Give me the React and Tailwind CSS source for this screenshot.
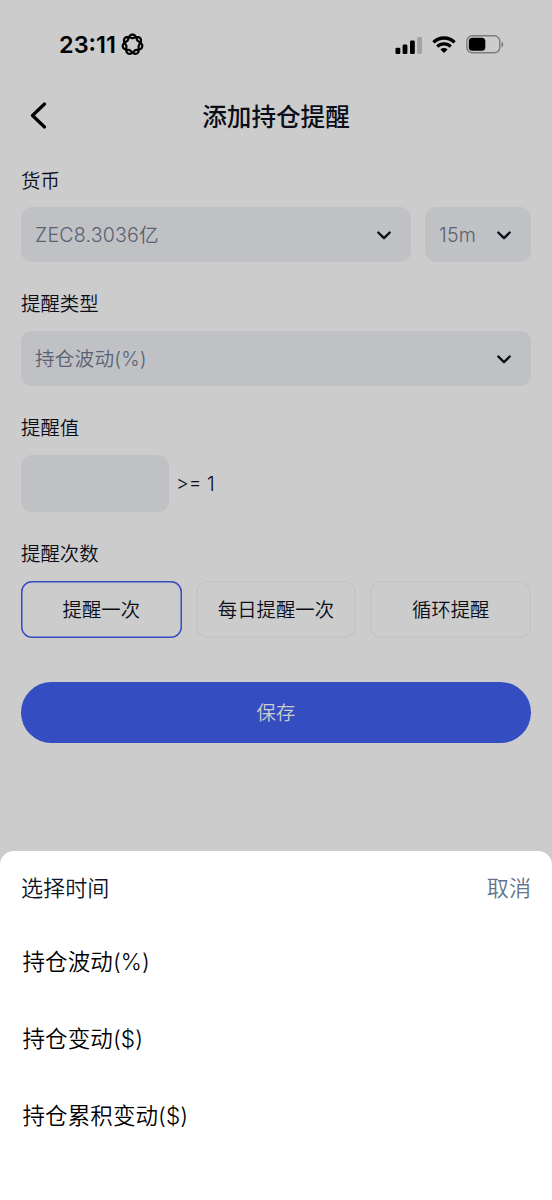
import React, { useState } from 'react';

const frequencies = ['提醒一次', '每日提醒一次', '循环提醒'];
const options = ['持仓波动(%)', '持仓变动($)', '持仓累积变动($)'];

// Seven-lobed woven ring, two turns around the centre
const rosette = Array.from({ length: 169 }, (_, i) => {
    const t = (i / 168) * Math.PI * 4;
    const r = 7.8 + 1.75 * Math.cos(3.5 * t);
    return `${(11 + r * Math.sin(t)).toFixed(2)},${(11 - r * Math.cos(t)).toFixed(2)}`;
}).join(' ');

const Chevron = () => (
    <svg width="14" height="9" viewBox="0 0 14 9" fill="none" stroke="#0b0e18" strokeWidth="2.4" strokeLinecap="round" strokeLinejoin="round">
        <path d="M1.3 1.5 7 7.1l5.7-5.6" />
    </svg>
);

const StatusBar = () => (
    <div className="flex h-[90px] items-center justify-between pl-[59px] pr-12 text-black">
        <div className="flex items-center gap-[5px]">
            <span className="font-['Inter'] text-[23.5px] leading-7 font-semibold">23:11</span>
            <svg className="mb-px" width="23" height="23" viewBox="0 0 22 22" fill="none" stroke="currentColor" strokeWidth="2.1" strokeLinejoin="round">
                <polygon points={rosette} />
            </svg>
        </div>
        <div className="flex items-center">
            <svg width="27" height="17" viewBox="0 0 27 17" fill="currentColor">
                <rect x="0.5" y="10.8" width="4.8" height="6.2" rx="1.3" />
                <rect x="7.6" y="7.6" width="4.8" height="9.4" rx="1.3" />
                <rect x="15" y="3.6" width="4.8" height="13.4" rx="1.3" />
                <rect x="22.2" y="0" width="4.8" height="17" rx="1.3" fill="#a3a3a3" />
            </svg>
            <svg className="mb-px ml-2.5" width="24" height="17" viewBox="0 0 24 17" fill="none" stroke="currentColor" strokeWidth="3.3">
                <path d="M1.4 6.4a15 15 0 0 1 21.2 0" />
                <path d="M5.3 10.6a9.5 9.5 0 0 1 13.4 0" />
                <path d="M12 17 8.4 13.6a5.1 5.1 0 0 1 7.2 0z" fill="currentColor" stroke="none" />
            </svg>
            <svg className="mb-px ml-2.5" width="38" height="19" viewBox="0 0 38 19">
                <rect x="0.8" y="0.8" width="33" height="17" rx="5.5" fill="none" stroke="#7c7c7c" strokeWidth="1.4" />
                <rect x="2.8" y="2.8" width="16.5" height="13" rx="3.6" fill="#000" />
                <path d="M35.5 6.5c2.4 1 2.4 5 0 6z" fill="#7c7c7c" />
            </svg>
        </div>
    </div>
);

const Select = ({ value, className }) => (
    <button className={`flex h-[55px] items-center justify-between rounded-[11px] bg-[#c0c1c5] px-3.5 text-[19.6px] tracking-[0.2px] text-[#596171] ${className}`}>
        <span className="pt-[3px]">{value}</span>
        <span className="mr-1.5 pt-px"><Chevron /></span>
    </button>
);

const Label = ({ children }) => (
    <div className="h-7 pt-px text-[19.4px] leading-7 text-[#0b0e18]">{children}</div>
);

const App = () => {
    const [active, setActive] = useState(0);

    return (
        <div className="flex h-[1200px] w-[552px] flex-col overflow-hidden bg-[#cccccc] font-['Inter','Noto_Sans_CJK_SC',sans-serif] font-[350]">
            <div className="h-[851px]">
                <StatusBar />

                {/* Title bar */}
                <header className="grid h-[52px] grid-cols-[60px_1fr_60px] items-center">
                    <svg className="mb-0.5 ml-[30px]" width="17" height="27" viewBox="0 0 17 27" fill="none" stroke="#000" strokeWidth="3.2" strokeLinecap="round" strokeLinejoin="round">
                        <path d="M14.5 2 2.5 13.5l12 11.5" />
                    </svg>
                    <h1 className="pt-px text-center text-[24.6px] leading-9 font-medium text-[#0b0e18]">添加持仓提醒</h1>
                </header>

                <div className="px-[21px] pt-6">
                    <Label>货币</Label>
                    <div className="mt-[13px] flex gap-3.5">
                        <Select value="ZEC8.3036亿" className="flex-1" />
                        <Select value="15m" className="w-[106px]" />
                    </div>

                    <div className="mt-[27px]">
                        <Label>提醒类型</Label>
                        <Select value="持仓波动(%)" className="mt-3.5 w-full" />
                    </div>

                    <div className="mt-[27px]">
                        <Label>提醒值</Label>
                        <div className="mt-3.5 flex items-center gap-[7px]">
                            <input className="h-[57px] w-[148px] rounded-[11px] bg-[#c0c1c5] px-3.5 text-[19.5px] outline-none" />
                            <span className="pt-0.5 text-[19.5px] text-[#0b0e18]">&gt;= 1</span>
                        </div>
                    </div>

                    <div className="mt-[27px]">
                        <Label>提醒次数</Label>
                        <div className="mt-3.5 grid grid-cols-3 gap-3.5">
                            {frequencies.map((name, i) => (
                                <button
                                    key={name}
                                    onClick={() => setActive(i)}
                                    className={`h-[57px] rounded-[11px] pt-[3px] text-[19.4px] text-[#0b0e18] ring-[1.5px] ring-inset ${i === active ? 'ring-[#344dc0]' : 'ring-[#c3c4c7]'}`}
                                >
                                    {name}
                                </button>
                            ))}
                        </div>
                    </div>

                    <button className="mt-11 h-[61px] w-full rounded-full bg-[#344dc0] pt-[3px] text-[19.4px] text-[#cccccc]">保存</button>
                </div>
            </div>

            {/* Bottom sheet */}
            <div className="flex-1 rounded-t-[14px] bg-white px-[21px] pt-[22px]">
                <div className="flex h-8 items-center justify-between text-[22.1px]">
                    <span className="text-[#0f172a]">选择时间</span>
                    <button className="text-[#64748b]">取消</button>
                </div>
                <ul className="mt-[18px] pl-[1.5px] text-[22.5px] tracking-[0.1px] text-black">
                    {options.map(option => (
                        <li key={option} className="flex h-[77px] items-center">{option}</li>
                    ))}
                </ul>
            </div>
        </div>
    );
};

export default App;
